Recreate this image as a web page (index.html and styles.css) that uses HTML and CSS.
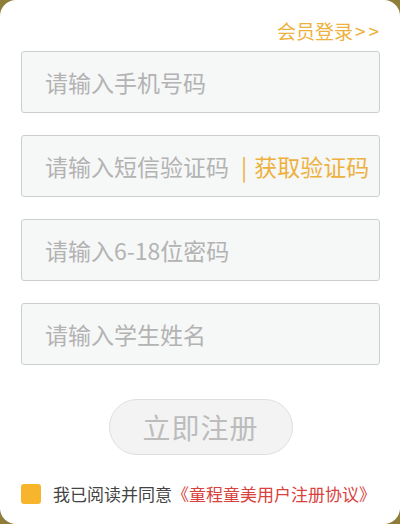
FILE: index.html
```html
<!DOCTYPE html>
<html lang="zh-CN">
<head>
    <meta charset="UTF-8">
    <meta name="viewport" content="width=device-width, initial-scale=1.0">
    <title>注册</title>
    <link rel="stylesheet" href="styles.css">
</head>
<body>
    <div class="card">
        <div class="login-link"><a href="#">会员登录<span class="arrows">&gt;&gt;</span></a></div>

        <form class="reg-form">
            <div class="field">
                <input type="text" placeholder="请输入手机号码">
            </div>
            <div class="field">
                <input type="text" class="code-input" placeholder="请输入短信验证码">
                <span class="sep">|</span>
                <a href="#" class="get-code">获取验证码</a>
            </div>
            <div class="field">
                <input type="password" placeholder="请输入6-18位密码">
            </div>
            <div class="field">
                <input type="text" placeholder="请输入学生姓名">
            </div>

            <div class="btn-row">
                <button type="button" class="submit">立即注册</button>
            </div>

            <div class="agree">
                <span class="check"></span>
                <span class="agree-text">我已阅读并同意</span>
                <a href="#" class="protocol">《童程童美用户注册协议》</a>
            </div>
        </form>
    </div>
</body>
</html>
```

FILE: styles.css
```css
body {
    margin: 0;
    background-color: #8f7d3a;
    font-family: "Noto Sans CJK SC", "Microsoft YaHei", sans-serif;
}

.card {
    background-color: #fff;
    height: 524px;
    border-radius: 16px;
    box-sizing: border-box;
    padding-top: 20px;
    overflow: hidden;
}

.login-link {
    text-align: right;
    padding-right: 21px;
    font-size: 19px;
    line-height: 22px;
    height: 22px;
    margin-bottom: 9px;
}

.login-link a {
    color: #edb13e;
    text-decoration: none;
}

.arrows {
    letter-spacing: 3px;
    margin-right: -3px;
    padding-left: 2px;
}

.reg-form {
    padding: 0 20px 0 21px;
}

.field {
    display: flex;
    align-items: center;
    height: 62px;
    box-sizing: border-box;
    border: 1px solid #cdcfcf;
    border-radius: 3px;
    background-color: #f6f7f7;
    margin-bottom: 22px;
    padding-left: 23px;
}

.field input {
    flex: 1;
    min-width: 0;
    border: none;
    outline: none;
    background: transparent;
    font-family: inherit;
    font-size: 23px;
    color: #555;
    padding: 0;
}

.field input::placeholder {
    color: #b3b3b3;
}

.code-input {
    flex: 0 0 193px !important;
}

.sep {
    color: #edb13e;
    font-size: 23px;
    margin: 0 7px 0 3px;
}

.get-code {
    color: #edb13e;
    font-size: 23px;
    text-decoration: none;
    white-space: nowrap;
}

.btn-row {
    display: flex;
    justify-content: center;
    padding-top: 12px;
}

.submit {
    width: 184px;
    height: 56px;
    border-radius: 28px;
    border: 1px solid #dedede;
    background-color: #f3f3f3;
    color: #bcbcbc;
    font-family: inherit;
    font-size: 28px;
    letter-spacing: 1px;
    cursor: pointer;
}

.agree {
    display: flex;
    align-items: center;
    margin-top: 26px;
    font-size: 17px;
}

.check {
    width: 20px;
    height: 20px;
    border-radius: 3px;
    background-color: #f7b52d;
    margin-right: 12px;
}

.agree-text {
    color: #444;
}

.protocol {
    color: #d8413c;
    text-decoration: none;
}
```
